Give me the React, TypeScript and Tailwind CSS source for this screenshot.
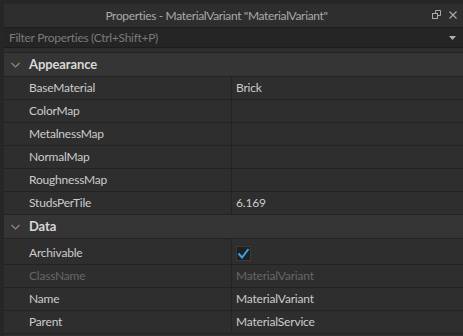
import React from 'react';

const font = { fontFamily: '"Lato", "Open Sans", sans-serif' };

type Row = { name: string; value?: string; check?: boolean; disabled?: boolean };

const appearance: Row[] = [
  { name: 'BaseMaterial', value: 'Brick' },
  { name: 'ColorMap' },
  { name: 'MetalnessMap' },
  { name: 'NormalMap' },
  { name: 'RoughnessMap' },
  { name: 'StudsPerTile', value: '6.169' },
];

const data: Row[] = [
  { name: 'Archivable', check: true },
  { name: 'ClassName', value: 'MaterialVariant', disabled: true },
  { name: 'Name', value: 'MaterialVariant' },
  { name: 'Parent', value: 'MaterialService' },
];

const Chevron = () => (
  <svg width="9" height="6" viewBox="0 0 9 6" className="ml-[7px] mr-[9px]">
    <path d="M0.5 1l4 4 4-4" fill="none" stroke="#8a8a8a" strokeWidth="1.2" />
  </svg>
);

const Section = ({ title }: { title: string }) => (
  <div className="h-[24px] flex items-center bg-[#353535] border-b border-[#232323] shrink-0">
    <Chevron />
    <span className="text-[13px] font-bold tracking-[-0.1px] text-[#d8d8d8]">{title}</span>
  </div>
);

const PropRow = ({ row }: { row: Row }) => (
  <div className={`${row.check ? 'h-[26px]' : 'h-[23px]'} flex border-b border-[#232323] shrink-0`}>
    <div
      className={`w-[228px] pl-[25px] flex items-center border-r border-[#232323] text-[12px] tracking-[-0.2px] ${
        row.check ? 'pt-[3px]' : ''
      } ${row.disabled ? 'text-[#666666]' : 'text-[#cccccc]'}`}
    >
      {row.name}
    </div>
    <div
      className={`flex-1 pl-[4px] flex text-[12px] tracking-[-0.2px] ${row.check ? 'items-start' : 'items-center'} ${
        row.disabled ? 'text-[#666666]' : 'text-[#cccccc]'
      }`}
    >
      {row.check ? (
        <div className="w-[15px] h-[15px] mt-[7px] bg-[#202020] border border-[#3a3a3a] flex items-center justify-center">
          <svg width="13" height="11" viewBox="0 0 13 11">
            <path d="M1.5 5.5l3.5 4 6.5-8.5" fill="none" stroke="#35a3f0" strokeWidth="2" />
          </svg>
        </div>
      ) : (
        row.value
      )}
    </div>
  </div>
);

export default function App() {
  return (
    <div className="w-[463px] h-[336px] bg-[#262626] pt-[4px] pl-[4px] overflow-hidden" style={font}>
      <div className="h-full bg-[#2e2e2e] flex flex-col">
        <div className="h-[23px] relative flex items-center justify-center pr-[34px] shrink-0">
          <span className="text-[12px] tracking-[-0.35px] text-[#aaaaaa]">
            Properties - MaterialVariant "MaterialVariant"
          </span>
          <div className="absolute right-[6px] top-[6px] flex items-center gap-[8px]">
            <svg width="9" height="9" viewBox="0 0 9 9">
              <rect x="0.5" y="3.5" width="5" height="5" fill="none" stroke="#aaaaaa" />
              <path d="M3.5 3.5V0.5h5v5h-3" fill="none" stroke="#aaaaaa" />
            </svg>
            <svg width="8" height="8" viewBox="0 0 8 8">
              <path d="M0.5 0.5l7 7M7.5 0.5l-7 7" stroke="#aaaaaa" strokeWidth="1.2" />
            </svg>
          </div>
        </div>
        <div className="h-[21px] bg-[#252525] border-y border-[#1d1d1d] flex items-center justify-between pl-[5px] pr-[7px] shrink-0">
          <span className="text-[12px] tracking-[-0.3px] text-[#7a7a7a]">Filter Properties (Ctrl+Shift+P)</span>
          <svg width="7" height="4" viewBox="0 0 7 4">
            <path d="M0 0h7L3.5 4z" fill="#b0b0b0" />
          </svg>
        </div>
        <div className="h-[4px] shrink-0" />
        <div className="flex-1 flex flex-col border-t border-[#232323]">
          <Section title="Appearance" />
          {appearance.map((r) => (
            <PropRow key={r.name} row={r} />
          ))}
          <Section title="Data" />
          {data.map((r) => (
            <PropRow key={r.name} row={r} />
          ))}
        </div>
      </div>
    </div>
  );
}
